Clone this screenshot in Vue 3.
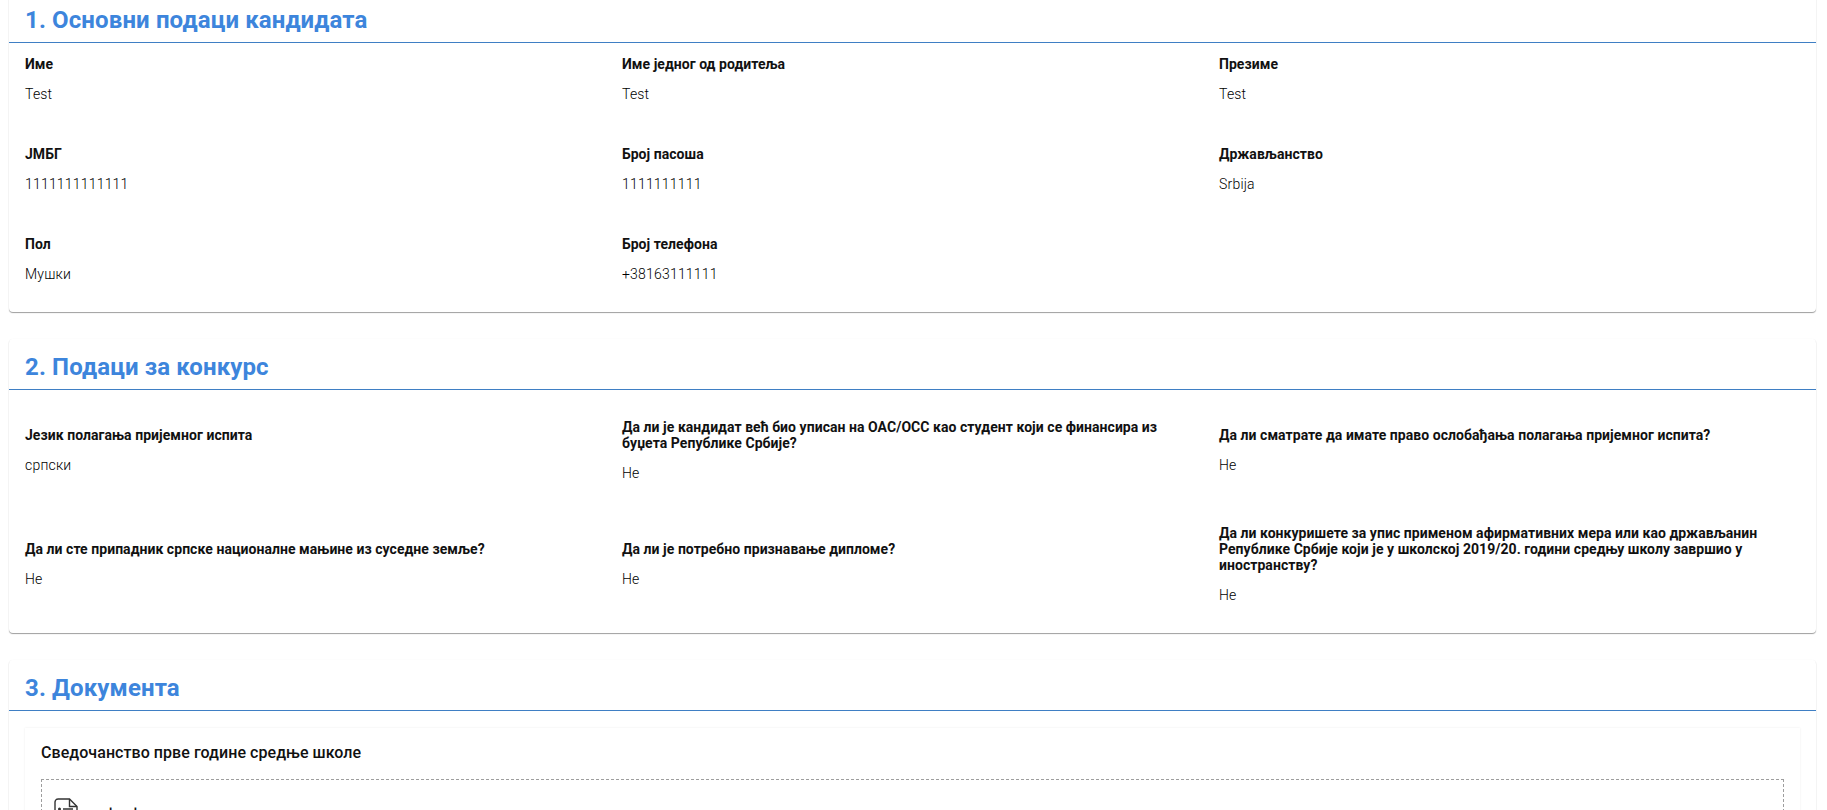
<script setup>
const cards = [
  {
    title: '1. Основни подаци кандидата',
    compact: true,
    fields: [
      { label: 'Име', value: 'Test' },
      { label: 'Име једног од родитеља', value: 'Test' },
      { label: 'Презиме', value: 'Test' },
      { label: 'ЈМБГ', value: '1111111111111' },
      { label: 'Број пасоша', value: '1111111111' },
      { label: 'Држављанство', value: 'Srbija' },
      { label: 'Пол', value: 'Мушки' },
      { label: 'Број телефона', value: '+38163111111' },
    ],
  },
  {
    title: '2. Подаци за конкурс',
    compact: false,
    fields: [
      { label: 'Језик полагања пријемног испита', value: 'српски' },
      { label: 'Да ли је кандидат већ био уписан на ОАС/ОСС као студент који се финансира из буџета Републике Србије?', value: 'Не' },
      { label: 'Да ли сматрате да имате право ослобађања полагања пријемног испита?', value: 'Не' },
      { label: 'Да ли сте припадник српске националне мањине из суседне земље?', value: 'Не' },
      { label: 'Да ли је потребно признавање дипломе?', value: 'Не' },
      { label: 'Да ли конкуришете за упис применом афирмативних мера или као држављанин Републике Србије који је у школској 2019/20. години средњу школу завршио у иностранству?', value: 'Не' },
    ],
  },
]
</script>

<template>
  <div class="page">
    <section v-for="card in cards" :key="card.title" class="card">
      <h2 class="title">{{ card.title }}</h2>
      <div class="grid" :class="card.compact ? 'compact' : 'centered'">
        <div v-for="f in card.fields" :key="f.label" class="field">
          <div class="label">{{ f.label }}</div>
          <div class="value">{{ f.value }}</div>
        </div>
      </div>
    </section>
    <section class="card last">
      <h2 class="title">3. Документа</h2>
      <div class="doc">
        <h3 class="doc-title">Сведочанство прве године средње школе</h3>
        <div class="drop">
          <svg class="file" width="24" height="30" viewBox="0 0 24 30" fill="none" stroke="#333" stroke-width="1.4">
            <path d="M3.500 1h12l7.500 7.500V26a3 3 0 0 1-3 3h-16a3 3 0 0 1-3-3V4a3 3 0 0 1 3-3z" />
            <path d="M15.500 1v7.500H23" />
            <path d="M9 11h10M9 16h10" />
            <circle cx="5.500" cy="11" r=".8" />
            <circle cx="5.500" cy="16" r=".8" />
          </svg>
          <span class="fname">test</span>
        </div>
      </div>
    </section>
  </div>
</template>

<style scoped>
.page {
  height: 810px;
  overflow: hidden;
  box-sizing: border-box;
  padding: 0 11px 0 9px;
  font-family: Roboto, "Noto Sans", sans-serif;
  color: #111;
  background: #fff;
}
.card {
  margin-bottom: 27px;
  background: #fff;
  border-radius: 4px;
  box-shadow: 0 1px 1px rgba(0, 0, 0, 0.38), 0 0 2px rgba(0, 0, 0, 0.03);
}
.card:first-child { margin-top: -8px; }
.title {
  margin: 0;
  height: 51px;
  box-sizing: border-box;
  padding: 13px 16px 0;
  border-bottom: 1px solid #3f7fc4;
  font-size: 24px;
  line-height: 30px;
  font-weight: 700;
  letter-spacing: 0.12px;
  color: #3d85dc;
}
.grid {
  display: grid;
  grid-template-columns: repeat(3, 1fr);
  padding-left: 16px;
}
.compact { grid-template-rows: 90px 90px 89px; }
.compact .field { padding: 13px 40px 0 0; }
.centered {
  grid-auto-rows: 114px;
  padding-top: 3px;
  padding-bottom: 12px;
}
.centered .field {
  display: flex;
  flex-direction: column;
  justify-content: center;
  padding-right: 40px;
}
.label {
  font-size: 14px;
  line-height: 16px;
  font-weight: 700;
  letter-spacing: 0.05px;
}
.value {
  margin-top: 14px;
  font-size: 14px;
  line-height: 16px;
  font-weight: 300;
  letter-spacing: 0.2px;
  color: #000;
}
.last { margin-bottom: 0; }
.doc {
  margin: 17px 16px 0;
  padding: 14px 16px 0;
  box-shadow: 0 0 2px rgba(0, 0, 0, 0.08);
}
.doc-title {
  margin: 0 0 15px;
  font-size: 16px;
  line-height: 22px;
  font-weight: 500;
  letter-spacing: 0.06px;
}
.drop {
  height: 100px;
  border: 1px dashed #9e9e9e;
  padding: 18px 12px;
  display: flex;
  gap: 30px;
}
.fname {
  font-size: 18px;
  line-height: 20px;
  margin-top: 6px;
}
</style>
